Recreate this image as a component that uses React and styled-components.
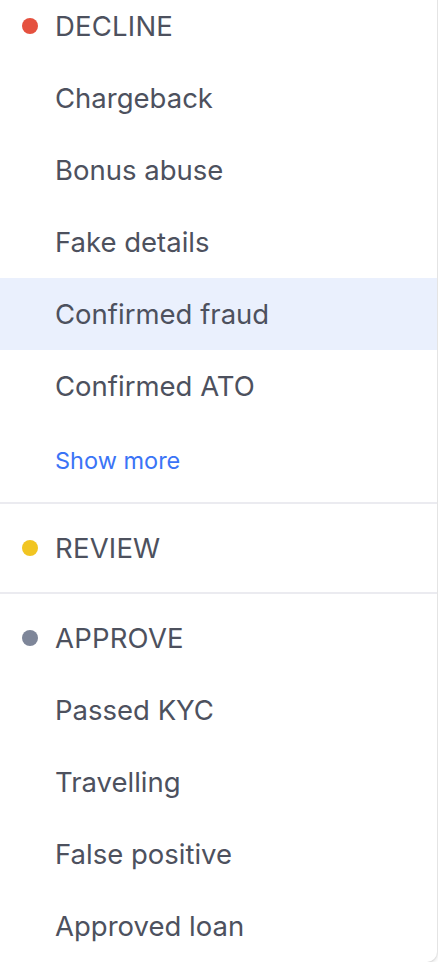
import React from "react";
import styled, { createGlobalStyle } from "styled-components";

const GlobalStyle = createGlobalStyle`
  body {
    margin: 0;
    background: #ffffff;
    font-family: Inter, "Noto Sans", sans-serif;
    overflow: hidden;
  }
`;

const groups = [
  {
    label: "DECLINE",
    color: "#e5513f",
    items: ["Chargeback", "Bonus abuse", "Fake details", "Confirmed fraud", "Confirmed ATO"],
    active: "Confirmed fraud",
    more: true,
  },
  { label: "REVIEW", color: "#f1c522", items: [] },
  {
    label: "APPROVE",
    color: "#7e8699",
    items: ["Passed KYC", "Travelling", "False positive", "Approved loan"],
  },
];

const Card = styled.div`
  margin: -18px 1px 0 -10px;
  background: #fff;
  border-radius: 10px;
  box-shadow: 0 1px 4px rgba(0, 0, 0, 0.18), 0 0 0 1px rgba(0, 0, 0, 0.03);
  overflow: hidden;
`;

const Section = styled.div`
  padding: 8px 0 ${(p) => (p.last ? "0" : "8px")};
  border-bottom: ${(p) => (p.last ? "none" : "2px solid #ebebf0")};
`;

const Header = styled.div`
  display: flex;
  align-items: center;
  gap: 17px;
  height: 72px;
  padding-left: 32px;
  font-size: 27.5px;
  color: #4d515e;
  letter-spacing: 0.2px;
`;

const Dot = styled.span`
  width: 16px;
  height: 16px;
  border-radius: 50%;
  background: ${(p) => p.color};
  flex: none;
`;

const Item = styled.div`
  display: flex;
  align-items: center;
  height: 72px;
  padding-left: 65px;
  font-size: 27.5px;
  color: #4d515e;
  background: ${(p) => (p.active ? "#eaf0fd" : "transparent")};
`;

const More = styled.div`
  display: flex;
  align-items: center;
  height: 72px;
  padding: 4px 0 0 65px;
  box-sizing: border-box;
  font-size: 23.5px;
  color: #3b74f6;
`;

export default function App() {
  return (
    <>
      <GlobalStyle />
      <Card>
        {groups.map((g, i) => (
          <Section key={g.label} last={i === groups.length - 1}>
            <Header>
              <Dot color={g.color} />
              {g.label}
            </Header>
            {g.items.map((item) => (
              <Item key={item} active={item === g.active}>
                {item}
              </Item>
            ))}
            {g.more && <More>Show more</More>}
          </Section>
        ))}
      </Card>
    </>
  );
}
